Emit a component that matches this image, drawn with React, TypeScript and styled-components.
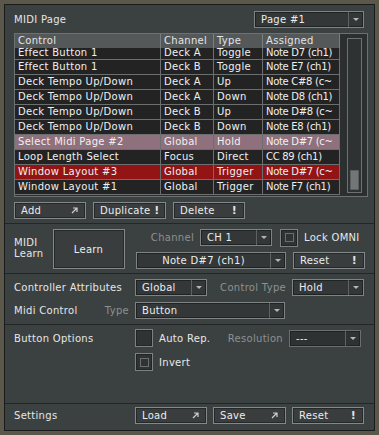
import React from "react";
import styled, { createGlobalStyle } from "styled-components";

const Global = createGlobalStyle`
  html, body { margin: 0; padding: 0; background: #5b574b; }
  body { font-family: "DejaVu Sans", "Liberation Sans", sans-serif; font-size: 10px; letter-spacing: 0.3px; color: #e6e6e6; }
  * { box-sizing: border-box; }
`;

const Outer = styled.div`
  width: 379px;
  height: 435px;
  padding: 4px;
  background: #5b574b;
`;

const Panel = styled.div`
  height: 427px;
  border: 1px solid #1a1c1c;
  background: #3b4041;
  display: flex;
  flex-direction: column;
`;

const Section = styled.div<{ $h: number; $pt: number; $last?: boolean }>`
  height: ${(p) => p.$h}px;
  flex: none;
  padding: ${(p) => p.$pt}px 9px 0 9px;
  border-bottom: ${(p) => (p.$last ? "none" : "1px solid #222627")};
  display: flex;
  flex-direction: column;
`;

const Row = styled.div<{ $mb?: number; $h?: number }>`
  display: flex;
  align-items: center;
  height: ${(p) => p.$h ?? 17}px;
  margin-bottom: ${(p) => p.$mb ?? 0}px;
`;

const Title = styled.div<{ $w?: number }>`
  width: ${(p) => p.$w ?? 120}px;
  flex: none;
  color: #e6e6e6;
  white-space: nowrap;
`;

const Label = styled.div<{ $w: number }>`
  width: ${(p) => p.$w}px;
  flex: none;
  color: #8d9292;
  text-align: right;
  padding-right: 6px;
  white-space: nowrap;
`;

const Spacer = styled.div<{ $w: number }>`
  width: ${(p) => p.$w}px;
  flex: none;
`;

const DropBox = styled.div<{ $w: number; $dim?: boolean }>`
  width: ${(p) => p.$w}px;
  height: 17px;
  flex: none;
  display: flex;
  border: 1px solid ${(p) => (p.$dim ? "#6a6e6f" : "#7f8384")};
  background: ${(p) => (p.$dim ? "#2e3233" : "#333738")};
  box-shadow: inset 0 0 0 1px #202324;
`;

const DropText = styled.div<{ $center?: boolean }>`
  flex: 1;
  padding-left: ${(p) => (p.$center ? 0 : 6)}px;
  text-align: ${(p) => (p.$center ? "center" : "left")};
  line-height: 15px;
  color: #ececec;
  white-space: nowrap;
  overflow: hidden;
`;

const DropArrow = styled.div`
  width: 15px;
  flex: none;
  border-left: 1px solid #5e6263;
  display: flex;
  align-items: center;
  justify-content: center;
  &::after {
    content: "";
    border-left: 3px solid transparent;
    border-right: 3px solid transparent;
    border-top: 3px solid #b4b8b8;
  }
`;

const Dropdown = ({ w, text, dim, center }: { w: number; text: string; dim?: boolean; center?: boolean }) => (
  <DropBox $w={w} $dim={dim}>
    <DropText $center={center}>{text}</DropText>
    <DropArrow />
  </DropBox>
);

const Btn = styled.div<{ $w: number; $h?: number; $center?: boolean }>`
  width: ${(p) => p.$w}px;
  height: ${(p) => p.$h ?? 17}px;
  flex: none;
  border: 1px solid #84888a;
  background: #393d3e;
  box-shadow: inset 0 0 0 1px #25292a;
  display: flex;
  align-items: center;
  gap: 4px;
  justify-content: ${(p) => (p.$center ? "center" : "space-between")};
  padding: 0 7px 0 6px;
  color: #ececec;
  white-space: nowrap;
`;

const BtnMark = styled.span`
  color: #e4e4e4;
  font-weight: bold;
  font-size: 11px;
`;

const ArrowIcon = () => (
  <svg width="7" height="7" viewBox="0 0 7 7">
    <path d="M1 6 L6 1 M2 1 H6 V5" stroke="#d0d0d0" strokeWidth="1.2" fill="none" />
  </svg>
);

const Check = styled.div<{ $inner?: boolean }>`
  width: 18px;
  height: 18px;
  flex: none;
  border: 1px solid #7d8182;
  background: #2f3334;
  box-shadow: inset 0 0 0 1px #222526;
  display: flex;
  align-items: center;
  justify-content: center;
  &::after {
    content: "";
    display: ${(p) => (p.$inner ? "block" : "none")};
    width: 7px;
    height: 7px;
    border: 1px solid #6a6e6f;
  }
`;

const CheckLabel = styled.div<{ $w: number }>`
  width: ${(p) => p.$w}px;
  flex: none;
  padding-left: 6px;
  color: #e8e8e8;
  white-space: nowrap;
`;

/* table */
const TableWrap = styled.div`
  margin-top: 5px;
  height: 164px;
  width: 354px;
  border: 1px solid #6d7172;
  background: #2c2f30;
  display: flex;
`;

const Grid = styled.div`
  width: 325px;
  flex: none;
  display: flex;
  flex-direction: column;
  overflow: hidden;
`;

const cols = "146px 53px 49px 77px";

const Header = styled.div`
  display: grid;
  grid-template-columns: ${cols};
  height: 14px;
  flex: none;
  background: #545859;
`;

const HCell = styled.div`
  padding-left: 3px;
  line-height: 14px;
  color: #e4e4e4;
  border-right: 1px solid #7a7e7f;
  white-space: nowrap;
  overflow: hidden;
`;

const TRow = styled.div<{ $bg: string; $cut?: boolean }>`
  display: grid;
  grid-template-columns: ${cols};
  height: ${(p) => (p.$cut ? 12 : 15)}px;
  flex: none;
  background: ${(p) => p.$bg};
  border-bottom: 1px solid #6b6f70;
`;

const TCell = styled.div<{ $cut?: boolean; $tight?: boolean }>`
  padding-left: 3px;
  line-height: ${(p) => (p.$cut ? 10 : 14)}px;
  letter-spacing: ${(p) => (p.$tight ? "-0.3px" : "0.3px")};
  color: #f0f0f0;
  border-right: 1px solid #6b6f70;
  white-space: nowrap;
  overflow: hidden;
`;

const ScrollArea = styled.div`
  flex: 1;
  display: flex;
  justify-content: center;
  padding-top: 4px;
  padding-left: 1px;
`;

const Track = styled.div`
  width: 15px;
  height: 155px;
  border: 1px solid #6d7172;
  background: #2e3233;
  display: flex;
  flex-direction: column;
  justify-content: flex-end;
  padding: 2px;
`;

const Thumb = styled.div`
  height: 20px;
  background: #727677;
  border: 1px solid #5a5e5f;
`;

const ButtonRow = styled.div`
  display: flex;
  gap: 7px;
  margin-top: 5px;
  height: 18px;
`;

const LearnBlock = styled.div`
  display: flex;
  align-items: flex-start;
`;

const LearnTitle = styled.div`
  width: 39px;
  flex: none;
  line-height: 11px;
  padding-top: 8px;
  color: #e6e6e6;
`;

const LearnRight = styled.div`
  display: flex;
  flex-direction: column;
  gap: 6px;
  margin-left: 5px;
`;

type RowData = [string, string, string, string, string];
const rows: RowData[] = [
  ["Effect Button 1", "Deck A", "Toggle", "Note D7 (ch1)", "#232323"],
  ["Effect Button 1", "Deck B", "Toggle", "Note E7 (ch1)", "#232323"],
  ["Deck Tempo Up/Down", "Deck A", "Up", "Note C#8 (c~", "#232323"],
  ["Deck Tempo Up/Down", "Deck A", "Down", "Note D8 (ch1)", "#232323"],
  ["Deck Tempo Up/Down", "Deck B", "Up", "Note D#8 (c~", "#232323"],
  ["Deck Tempo Up/Down", "Deck B", "Down", "Note E8 (ch1)", "#232323"],
  ["Select Midi Page #2", "Global", "Hold", "Note D#7 (c~", "#8f717d"],
  ["Loop Length Select", "Focus", "Direct", "CC 89 (ch1)", "#232323"],
  ["Window Layout #3", "Global", "Trigger", "Note D#7 (c~", "#921414"],
  ["Window Layout #1", "Global", "Trigger", "Note F7 (ch1)", "#232323"],
];

export default function App() {
  return (
    <>
      <Global />
      <Outer>
        <Panel>
          <Section $h={219} $pt={6}>
            <Row $h={17}>
              <Title $w={240}>MIDI Page</Title>
              <Dropdown w={110} text="Page #1" />
            </Row>
            <TableWrap>
              <Grid>
                <Header>
                  <HCell>Control</HCell>
                  <HCell>Channel</HCell>
                  <HCell>Type</HCell>
                  <HCell>Assigned</HCell>
                </Header>
                {rows.map((r, i) => (
                  <TRow key={i} $bg={r[4]} $cut={i === 0}>
                    <TCell $cut={i === 0}>{r[0]}</TCell>
                    <TCell $cut={i === 0}>{r[1]}</TCell>
                    <TCell $cut={i === 0}>{r[2]}</TCell>
                    <TCell $cut={i === 0} $tight>
                      {r[3]}
                    </TCell>
                  </TRow>
                ))}
              </Grid>
              <ScrollArea>
                <Track>
                  <Thumb />
                </Track>
              </ScrollArea>
            </TableWrap>
            <ButtonRow>
              <Btn $w={72}>
                Add <ArrowIcon />
              </Btn>
              <Btn $w={73}>
                Duplicate <BtnMark>!</BtnMark>
              </Btn>
              <Btn $w={72}>
                Delete <BtnMark>!</BtnMark>
              </Btn>
            </ButtonRow>
          </Section>

          <Section $h={50} $pt={5}>
            <LearnBlock>
              <LearnTitle>
                MIDI
                <br />
                Learn
              </LearnTitle>
              <Btn $w={72} $h={40} $center>
                Learn
              </Btn>
              <LearnRight>
                <Row>
                  <Label $w={70}>Channel</Label>
                  <Dropdown w={72} text="CH 1" />
                  <Spacer $w={8} />
                  <Check $inner />
                  <CheckLabel $w={70}>Lock OMNI</CheckLabel>
                </Row>
                <Row>
                  <Spacer $w={6} />
                  <Dropdown w={150} text="Note D#7 (ch1)" center />
                  <Spacer $w={7} />
                  <Btn $w={72}>
                    Reset <BtnMark>!</BtnMark>
                  </Btn>
                </Row>
              </LearnRight>
            </LearnBlock>
          </Section>

          <Section $h={51} $pt={5}>
            <Row $mb={6}>
              <Title $w={121}>Controller Attributes</Title>
              <Dropdown w={72} text="Global" />
              <Label $w={85}>Control Type</Label>
              <Dropdown w={72} text="Hold" />
            </Row>
            <Row>
              <Title $w={65}>Midi Control</Title>
              <Label $w={56}>Type</Label>
              <Dropdown w={150} text="Button" />
            </Row>
          </Section>

          <Section $h={79} $pt={4}>
            <Row $mb={6} $h={18}>
              <Title $w={121}>Button Options</Title>
              <Check />
              <CheckLabel $w={65}>Auto Rep.</CheckLabel>
              <Label $w={71}>Resolution</Label>
              <Dropdown w={72} text="---" dim />
            </Row>
            <Row $h={18}>
              <Spacer $w={121} />
              <Check $inner />
              <CheckLabel $w={60}>Invert</CheckLabel>
            </Row>
          </Section>

          <Section $h={26} $pt={3} $last>
            <Row>
              <Title $w={121}>Settings</Title>
              <Btn $w={72}>
                Load <ArrowIcon />
              </Btn>
              <Spacer $w={6} />
              <Btn $w={73}>
                Save <ArrowIcon />
              </Btn>
              <Spacer $w={6} />
              <Btn $w={72}>
                Reset <BtnMark>!</BtnMark>
              </Btn>
            </Row>
          </Section>
        </Panel>
      </Outer>
    </>
  );
}
